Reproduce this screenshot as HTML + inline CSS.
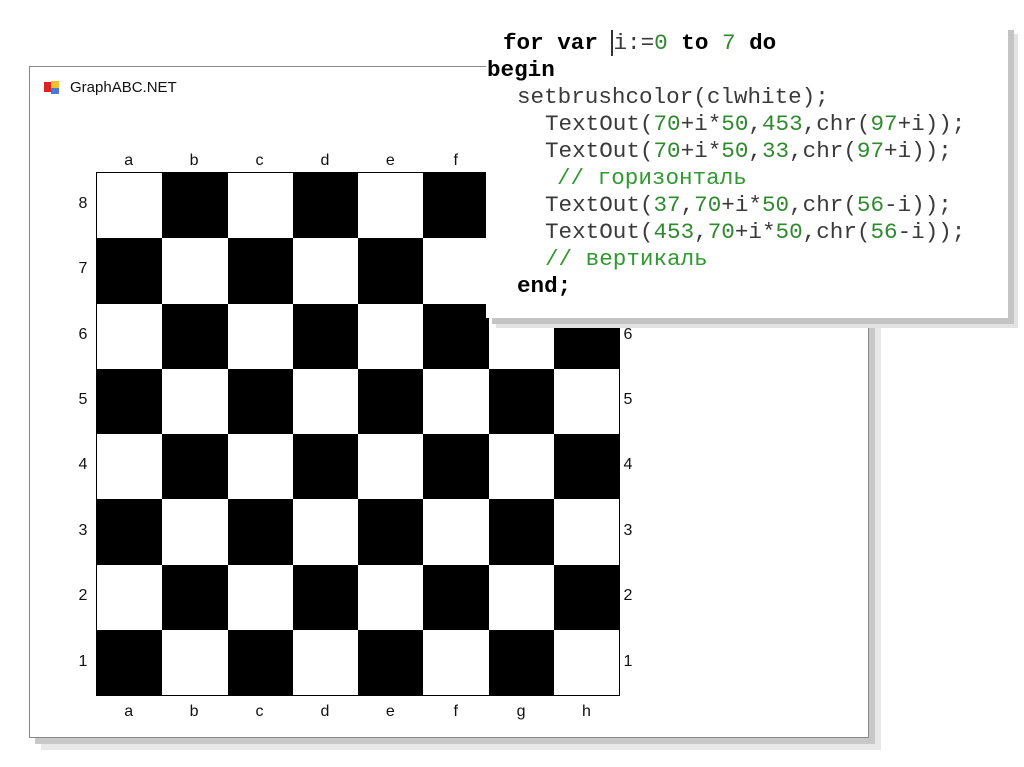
<!DOCTYPE html>
<html><head><meta charset="utf-8"><style>
body{margin:0;width:1024px;height:767px;background:#fff;position:relative;overflow:hidden;font-family:"Liberation Sans",sans-serif}
.abs{position:absolute}
#win{left:29px;top:66px;width:838px;height:670px;background:#fff;border:1px solid #888;box-shadow:6px 6px 0 #c8c8c8,12px 12px 0 #e8e8e8}
#board{left:96px;top:172px;width:522px;height:522px;border:1px solid #000;display:grid;grid-template-columns:repeat(8,1fr);grid-template-rows:repeat(8,1fr)}
.b{background:#000}
.lbl{position:absolute;font-size:16px;color:#111;width:20px;text-align:center}
#code{left:486px;top:24px;width:522px;height:294px;background:#fff;box-shadow:6px 6px 0 #c4c4c4,10px 10px 0 #e2e2e2;font-family:"Liberation Mono","Courier New",monospace;font-size:22.6px;color:#3a3a3a}
.ln{position:absolute;white-space:pre;line-height:27px}
.k{font-weight:bold;color:#000}.n{color:#2f8a2f}.c{color:#2f9a2f}
</style></head><body>
<div id="win" class="abs">
<svg class="abs" style="left:13px;top:13px" width="18" height="16"><rect x="1" y="2" width="7" height="10" fill="#d22"/><rect x="8" y="1" width="8" height="7" fill="#f0c030"/><rect x="8" y="8" width="8" height="6" fill="#4a7ad8"/></svg>
<div class="abs" style="left:40px;top:12px;font-size:15px;color:#111">GraphABC.NET</div>
</div>
<div id="board" class="abs"></div>
<div id="code" class="abs">
<div class="ln" style="left:17px;top:6px"><span class="k">for var</span> <span style="border-left:2px solid #333">i</span>:=<span class="n">0</span> <span class="k">to</span> <span class="n">7</span> <span class="k">do</span></div>
<div class="ln k" style="left:1px;top:33px">begin</div>
<div class="ln" style="left:31px;top:60px">setbrushcolor(clwhite);</div>
<div class="ln" style="left:59px;top:87px">TextOut(<span class="n">70</span>+i*<span class="n">50</span>,<span class="n">453</span>,chr(<span class="n">97</span>+i));</div>
<div class="ln" style="left:59px;top:114px">TextOut(<span class="n">70</span>+i*<span class="n">50</span>,<span class="n">33</span>,chr(<span class="n">97</span>+i));</div>
<div class="ln c" style="left:71px;top:141px">// горизонталь</div>
<div class="ln" style="left:59px;top:168px">TextOut(<span class="n">37</span>,<span class="n">70</span>+i*<span class="n">50</span>,chr(<span class="n">56</span>-i));</div>
<div class="ln" style="left:59px;top:195px">TextOut(<span class="n">453</span>,<span class="n">70</span>+i*<span class="n">50</span>,chr(<span class="n">56</span>-i));</div>
<div class="ln c" style="left:59px;top:222px">// вертикаль</div>
<div class="ln k" style="left:31px;top:249px">end;</div>
</div>
<script>
var b=document.getElementById('board'),h='';
for(var r=0;r<8;r++)for(var c=0;c<8;c++)h+='<div class="'+((r+c)%2?'b':'')+'"></div>';
b.innerHTML=h;
var L='abcdefgh',s='';
for(var i=0;i<8;i++){var x=96+i*65.4+32.7-10;
s+='<div class="lbl" style="left:'+x+'px;top:152px">'+L[i]+'</div>';
s+='<div class="lbl" style="left:'+x+'px;top:703px">'+L[i]+'</div>';
var y=172+i*65.4+32.7-10;
s+='<div class="lbl" style="left:73px;top:'+y+'px">'+(8-i)+'</div>';
s+='<div class="lbl" style="left:618px;top:'+y+'px">'+(8-i)+'</div>';}
document.body.insertAdjacentHTML('beforeend',s);
document.body.appendChild(document.getElementById('code'));
</script>
</body></html>
